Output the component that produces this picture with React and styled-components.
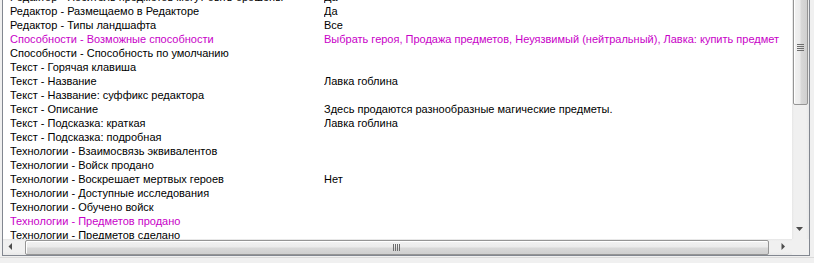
import React from "react";
import styled, { createGlobalStyle } from "styled-components";

const Global = createGlobalStyle`
  html, body { margin: 0; padding: 0; background: #f0f0f0; overflow: hidden; }
  #root { width: 814px; height: 263px; }
`;

const Frame = styled.div`
  width: 814px;
  height: 263px;
  background: #f0f0f0;
  padding-left: 2px;
  box-sizing: border-box;
`;

const Panel = styled.div`
  width: 808px;
  height: 256px;
  box-sizing: border-box;
  border-left: 1px solid #828790;
  border-right: 1px solid #828790;
  border-bottom: 1px solid #828790;
  background: #fff;
  display: grid;
  grid-template-columns: 1fr 17px;
  grid-template-rows: 239px 16px;
  position: relative;
  &::after {
    content: "";
    position: absolute;
    left: -3px;
    right: -5px;
    bottom: -3px;
    height: 1px;
    background: #dadada;
  }
`;

const List = styled.div`
  overflow: hidden;
  background: #fff;
`;

const Rows = styled.div`
  margin-top: -10px;
  padding-left: 7px;
`;

const Row = styled.div`
  display: grid;
  grid-template-columns: 314px 1fr;
  height: 14px;
  line-height: 14px;
  font-family: "Liberation Sans", Arial, sans-serif;
  font-size: 11px;
  color: ${(p) => (p.$mod ? "#c800c8" : "#000")};
  white-space: nowrap;
`;

const Cell = styled.span`
  overflow: hidden;
`;

const VTrack = styled.div`
  position: relative;
  background: linear-gradient(to right, #e6e6e6 0, #f0f0f0 2px, #f0f0f0 14px, #e8e8e8 100%);
`;

const VThumb = styled.div`
  position: absolute;
  left: 1px;
  top: -10px;
  width: 15px;
  height: 115px;
  box-sizing: border-box;
  border: 1px solid #959595;
  border-radius: 2px;
  background: linear-gradient(to right, #f2f2f2 0%, #ebebeb 45%, #d8d8d8 55%, #cfcfcf 100%);
  box-shadow: inset 1px 1px 0 #fff;
  display: flex;
  align-items: center;
  justify-content: center;
`;

const HTrack = styled.div`
  position: relative;
  background: linear-gradient(to bottom, #e6e6e6 0, #f0f0f0 2px, #f0f0f0 13px, #e8e8e8 100%);
`;

const HThumb = styled.div`
  position: absolute;
  left: 22px;
  right: 23px;
  top: 1px;
  height: 15px;
  box-sizing: border-box;
  border: 1px solid #959595;
  border-radius: 2px;
  background: linear-gradient(to bottom, #f2f2f2 0%, #ebebeb 45%, #d8d8d8 55%, #cfcfcf 100%);
  box-shadow: inset 1px 1px 0 #fff;
  display: flex;
  align-items: center;
  justify-content: center;
`;

const Arrow = styled.svg`
  position: absolute;
  left: ${(p) => p.$x}px;
  top: ${(p) => p.$y}px;
`;

const Corner = styled.div`
  background: #f0f0f0;
`;

const rows = [
  ["Редактор - Носитель предметов могут быть брошены", "Да"],
  ["Редактор - Размещаемо в Редакторе", "Да"],
  ["Редактор - Типы ландшафта", "Все"],
  ["Способности - Возможные способности", "Выбрать героя, Продажа предметов, Неуязвимый (нейтральный), Лавка: купить предмет", true],
  ["Способности - Способность по умолчанию", ""],
  ["Текст - Горячая клавиша", ""],
  ["Текст - Название", "Лавка гоблина"],
  ["Текст - Название: суффикс редактора", ""],
  ["Текст - Описание", "Здесь продаются разнообразные магические предметы."],
  ["Текст - Подсказка: краткая", "Лавка гоблина"],
  ["Текст - Подсказка: подробная", ""],
  ["Технологии - Взаимосвязь эквивалентов", ""],
  ["Технологии - Войск продано", ""],
  ["Технологии - Воскрешает мертвых героев", "Нет"],
  ["Технологии - Доступные исследования", ""],
  ["Технологии - Обучено войск", ""],
  ["Технологии - Предметов продано", "", true],
  ["Технологии - Предметов сделано", ""],
];

export default function App() {
  return (
    <Frame>
      <Global />
      <Panel>
        <List>
          <Rows>
            {rows.map(([k, v, m], i) => (
              <Row key={i} $mod={m}>
                <Cell>{k}</Cell>
                <Cell>{v}</Cell>
              </Row>
            ))}
          </Rows>
        </List>
        <VTrack>
          <VThumb>
            <svg width="7" height="8" viewBox="0 0 7 8">
              {[0, 2, 4, 6].map((y) => (
                <rect key={y} x="0" y={y} width="7" height="1" fill="#6d6d6d" />
              ))}
            </svg>
          </VThumb>
          <Arrow $x={4} $y={227} width="9" height="5" viewBox="0 0 9 5">
            <path d="M0 0h7l-3.5 4z" fill="#4d4d4d" />
          </Arrow>
        </VTrack>
        <HTrack>
          <Arrow $x={5} $y={4} width="5" height="9" viewBox="0 0 5 9">
            <path d="M4 0v7L0.5 3.5z" fill="#4d4d4d" />
          </Arrow>
          <HThumb>
            <svg width="8" height="7" viewBox="0 0 8 7">
              {[0, 2, 4, 6].map((x) => (
                <rect key={x} x={x} y="0" width="1" height="7" fill="#6d6d6d" />
              ))}
            </svg>
          </HThumb>
          <Arrow $x={778} $y={4} width="5" height="9" viewBox="0 0 5 9">
            <path d="M0.5 0v7L4 3.5z" fill="#4d4d4d" />
          </Arrow>
        </HTrack>
        <Corner />
      </Panel>
    </Frame>
  );
}
